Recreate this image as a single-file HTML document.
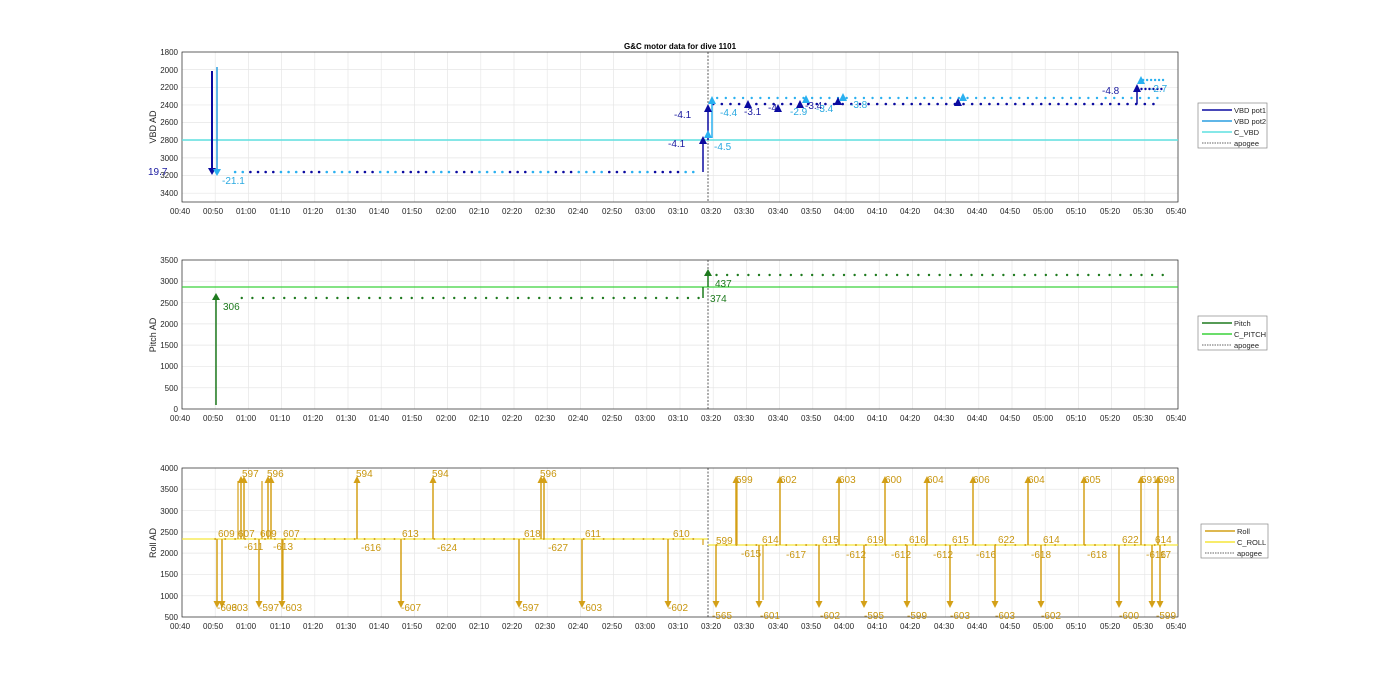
<!DOCTYPE html>
<html><head><meta charset="utf-8"><style>
html,body{margin:0;padding:0;background:#fff;}
svg{display:block;font-family:"Liberation Sans",sans-serif;}
.t{font-size:8px;fill:#262626;}
.yl{font-size:9px;fill:#262626;}
</style></head><body>
<svg id="s" width="1400" height="693" viewBox="0 0 1400 693">
<text x="680" y="49" text-anchor="middle" font-size="8" font-weight="bold" fill="#000">G&amp;C motor data for dive 1101</text>
<g id="grid"></g>
<g id="data"></g>
<g class="t" text-anchor="end">
<text x="178" y="55">1800</text><text x="178" y="73">2000</text><text x="178" y="90">2200</text><text x="178" y="108">2400</text><text x="178" y="125">2600</text><text x="178" y="143">2800</text><text x="178" y="161">3000</text><text x="178" y="178">3200</text><text x="178" y="196">3400</text>
<text x="178" y="263">3500</text><text x="178" y="284">3000</text><text x="178" y="306">2500</text><text x="178" y="327">2000</text><text x="178" y="348">1500</text><text x="178" y="369">1000</text><text x="178" y="391">500</text><text x="178" y="412">0</text>
<text x="178" y="471">4000</text><text x="178" y="492">3500</text><text x="178" y="514">3000</text><text x="178" y="535">2500</text><text x="178" y="556">2000</text><text x="178" y="577">1500</text><text x="178" y="599">1000</text><text x="178" y="620">500</text>
</g>
<text class="yl" transform="translate(156,127) rotate(-90)" text-anchor="middle">VBD AD</text>
<text class="yl" transform="translate(156,335) rotate(-90)" text-anchor="middle">Pitch AD</text>
<text class="yl" transform="translate(156,543) rotate(-90)" text-anchor="middle">Roll AD</text>
<g font-size="10">
<text x="148" y="175" fill="#1a1aa0">19.7</text><text x="222" y="184" fill="#2aa9e0">-21.1</text>
<text x="674" y="118" fill="#1a1aa0">-4.1</text><text x="668" y="147" fill="#1a1aa0">-4.1</text><text x="714" y="150" fill="#2aa9e0">-4.5</text>
<text x="720" y="116" fill="#2aa9e0">-4.4</text><text x="744" y="115" fill="#1a1aa0">-3.1</text><text x="768" y="111" fill="#1a1aa0">-4.</text>
<text x="790" y="115" fill="#2aa9e0">-2.9</text><text x="805" y="109" fill="#1a1aa0">-3.4</text><text x="816" y="112" fill="#2aa9e0">-3.4</text><text x="850" y="108" fill="#2aa9e0">-3.8</text>
<text x="1102" y="94" fill="#1a1aa0">-4.8</text><text x="1150" y="92" fill="#2aa9e0">-2.7</text>
<text x="223" y="310" fill="#1e7a1e">306</text><text x="715" y="287" fill="#1e7a1e">437</text><text x="710" y="302" fill="#1e7a1e">374</text>
</g>
<g font-size="10" fill="#c8960f">
<text x="218" y="537">609</text><text x="238" y="537">607</text><text x="260" y="537">609</text><text x="283" y="537">607</text>
<text x="242" y="477">597</text><text x="267" y="477">596</text><text x="356" y="477">594</text><text x="432" y="477">594</text><text x="540" y="477">596</text>
<text x="402" y="537">613</text><text x="524" y="537">618</text><text x="585" y="537">611</text><text x="673" y="537">610</text>
<text x="244" y="550">-611</text><text x="273" y="550">-613</text><text x="361" y="551">-616</text><text x="437" y="551">-624</text><text x="548" y="551">-627</text>
<text x="217" y="611">-603</text><text x="228" y="611">-603</text><text x="259" y="611">-597</text><text x="282" y="611">-603</text><text x="401" y="611">-607</text><text x="519" y="611">-597</text><text x="582" y="611">-603</text><text x="668" y="611">-602</text>
<text x="716" y="544">599</text><text x="736" y="483">599</text><text x="762" y="543">614</text><text x="780" y="483">602</text><text x="822" y="543">615</text><text x="839" y="483">603</text><text x="867" y="543">619</text><text x="885" y="483">600</text><text x="909" y="543">616</text><text x="927" y="483">604</text><text x="952" y="543">615</text><text x="973" y="483">606</text><text x="998" y="543">622</text><text x="1028" y="483">604</text><text x="1043" y="543">614</text><text x="1084" y="483">605</text><text x="1122" y="543">622</text><text x="1141" y="483">591</text><text x="1158" y="483">598</text><text x="1155" y="543">614</text>
<text x="741" y="557">-615</text><text x="786" y="558">-617</text><text x="846" y="558">-612</text><text x="891" y="558">-612</text><text x="933" y="558">-612</text><text x="976" y="558">-616</text><text x="1031" y="558">-618</text><text x="1087" y="558">-618</text><text x="1146" y="558">-616</text><text x="1160" y="558">17</text>
<text x="712" y="619">-565</text><text x="760" y="619">-601</text><text x="820" y="619">-602</text><text x="864" y="619">-595</text><text x="907" y="619">-599</text><text x="950" y="619">-603</text><text x="995" y="619">-603</text><text x="1041" y="619">-602</text><text x="1119" y="619">-600</text><text x="1156" y="619">-599</text>
</g>
<g font-size="7.5" fill="#262626">
<rect x="1198" y="103" width="69" height="45" fill="#fff" stroke="#888" stroke-width="0.7"/>
<line x1="1202" y1="110" x2="1232" y2="110" stroke="#0a0aa0" stroke-width="1.5"/><text x="1234" y="113">VBD pot1</text>
<line x1="1202" y1="121" x2="1232" y2="121" stroke="#2a9ee0" stroke-width="1.5"/><text x="1234" y="124">VBD pot2</text>
<line x1="1202" y1="132" x2="1232" y2="132" stroke="#5fe0e0" stroke-width="1.5"/><text x="1234" y="135">C_VBD</text>
<line x1="1202" y1="143" x2="1232" y2="143" stroke="#333" stroke-width="0.7" stroke-dasharray="1.5,1"/><text x="1234" y="146">apogee</text>
<rect x="1198" y="316" width="69" height="34" fill="#fff" stroke="#888" stroke-width="0.7"/>
<line x1="1202" y1="323" x2="1232" y2="323" stroke="#1e7a1e" stroke-width="1.5"/><text x="1234" y="326">Pitch</text>
<line x1="1202" y1="334" x2="1232" y2="334" stroke="#3ad23a" stroke-width="1.5"/><text x="1234" y="337">C_PITCH</text>
<line x1="1202" y1="345" x2="1232" y2="345" stroke="#333" stroke-width="0.7" stroke-dasharray="1.5,1"/><text x="1234" y="348">apogee</text>
<rect x="1201" y="524" width="67" height="34" fill="#fff" stroke="#888" stroke-width="0.7"/>
<line x1="1205" y1="531" x2="1235" y2="531" stroke="#d4a017" stroke-width="1.5"/><text x="1237" y="534">Roll</text>
<line x1="1205" y1="542" x2="1235" y2="542" stroke="#f5e63a" stroke-width="1.5"/><text x="1237" y="545">C_ROLL</text>
<line x1="1205" y1="553" x2="1235" y2="553" stroke="#333" stroke-width="0.7" stroke-dasharray="1.5,1"/><text x="1237" y="556">apogee</text>
</g>
</svg>
<script>
var NS="http://www.w3.org/2000/svg",G=document.getElementById('grid'),D=document.getElementById('data');
function el(p,n,a){var e=document.createElementNS(NS,n);for(var k in a)e.setAttribute(k,a[k]);p.appendChild(e);return e;}
var X0=182,X1=1178,dx=(X1-X0)/30;
var panels=[[52,202,9,8],[260,409,7,7],[468,617,7,7]];
panels.forEach(function(p){
 for(var i=0;i<=30;i++){var x=X0+i*dx;el(G,'line',{x1:x,y1:p[0],x2:x,y2:p[1],stroke:'#e6e6e6','stroke-width':0.7});}
 var n=p[3]; for(var j=0;j<=n;j++){var y=p[0]+(p[1]-p[0])*j/(p==panels[0]?8.5:n);el(G,'line',{x1:X0,y1:y,x2:X1,y2:y,stroke:'#e6e6e6','stroke-width':0.7});}
 el(G,'rect',{x:X0,y:p[0],width:X1-X0,height:p[1]-p[0],fill:'none',stroke:'#262626','stroke-width':0.7});
 el(G,'line',{x1:708,y1:p[0],x2:708,y2:p[1],stroke:'#333','stroke-width':0.8,'stroke-dasharray':'2,1.5'});
});
function tx(t){return X0+(t-40)*dx/10;}
el(D,'line',{x1:X0,y1:140,x2:X1,y2:140,stroke:'#5fe0e0','stroke-width':1.5});
el(D,'line',{x1:212,y1:71,x2:212,y2:172,stroke:'#0a0aa0','stroke-width':2});
el(D,'line',{x1:217,y1:67,x2:217,y2:172,stroke:'#2a9ee0','stroke-width':1.5});
for(var t=56;t<195;t+=2.3){el(D,'circle',{cx:tx(t),cy:172,r:1.3,fill:(Math.round(t)%2?'#0a0aa0':'#2ab0f0')});}
for(var t=200;t<334;t+=2.6){el(D,'circle',{cx:tx(t),cy:104,r:1.3,fill:'#0a0aa0'});el(D,'circle',{cx:tx(t+1.2),cy:98,r:1.2,fill:'#2ab0f0'});}
for(var t=329;t<336;t+=1.2){el(D,'circle',{cx:tx(t),cy:89,r:1.2,fill:'#0a0aa0'});el(D,'circle',{cx:tx(t+0.5),cy:80,r:1.2,fill:'#2ab0f0'});}
el(D,'line',{x1:703,y1:172,x2:703,y2:140,stroke:'#0a0aa0','stroke-width':1.5});
el(D,'line',{x1:708,y1:140,x2:708,y2:108,stroke:'#0a0aa0','stroke-width':1.5});
el(D,'line',{x1:712,y1:138,x2:712,y2:100,stroke:'#2ab0f0','stroke-width':1.5});
el(D,'line',{x1:1137,y1:104,x2:1137,y2:88,stroke:'#0a0aa0','stroke-width':1.5});
[[703,140,'#0a0aa0'],[708,108,'#0a0aa0'],[712,100,'#2ab0f0'],[708,134,'#2ab0f0'],[778,108,'#0a0aa0'],[800,104,'#0a0aa0'],[806,99,'#2ab0f0'],[838,101,'#0a0aa0'],[843,97,'#2ab0f0'],[958,102,'#0a0aa0'],[963,97,'#2ab0f0'],[1137,88,'#0a0aa0'],[1141,80,'#2ab0f0'],[748,104,'#0a0aa0']].forEach(function(a){
 el(D,'path',{d:'M'+(a[0]-4)+','+(a[1]+4)+'L'+(a[0]+4)+','+(a[1]+4)+'L'+a[0]+','+(a[1]-4)+'Z',fill:a[2]});});
el(D,'path',{d:'M208,168L216,168L212,175Z',fill:'#0a0aa0'});
el(D,'path',{d:'M213,169L221,169L217,176Z',fill:'#2ab0f0'});
el(D,'line',{x1:X0,y1:287,x2:X1,y2:287,stroke:'#3ad23a','stroke-width':1.2});
el(D,'line',{x1:216,y1:405,x2:216,y2:297,stroke:'#1e7a1e','stroke-width':1.5});
el(D,'path',{d:'M212,300L220,300L216,293Z',fill:'#1e7a1e'});
for(var t=58;t<196;t+=3.2){el(D,'circle',{cx:tx(t),cy:298,r:1.2,fill:'#1e7a1e'});}
for(var t=201;t<336;t+=3.2){el(D,'circle',{cx:tx(t),cy:275,r:1.2,fill:'#1e7a1e'});}
el(D,'line',{x1:703,y1:298,x2:703,y2:287,stroke:'#1e7a1e','stroke-width':1.5});
el(D,'line',{x1:708,y1:287,x2:708,y2:273,stroke:'#1e7a1e','stroke-width':1.5});
el(D,'path',{d:'M704,276L712,276L708,269Z',fill:'#1e7a1e'});
el(D,'line',{x1:X0,y1:539,x2:708,y2:539,stroke:'#f5e63a','stroke-width':1.2});
el(D,'line',{x1:708,y1:545,x2:X1,y2:545,stroke:'#f5e63a','stroke-width':1.2});
for(var t=50;t<196;t+=3){el(D,'circle',{cx:tx(t),cy:539,r:1,fill:'#d4a017'});}
for(var t=201;t<337;t+=3){el(D,'circle',{cx:tx(t),cy:545,r:1,fill:'#d4a017'});}
var ups=[[241,539],[244,539],[268,539],[271,539],[357,539],[433,539],[541,539],[544,539],[736,545],[780,545],[839,545],[885,545],[927,545],[973,545],[1028,545],[1084,545],[1141,545],[1158,545]];
var dns=[[217,539],[222,539],[259,539],[282,539],[401,539],[519,539],[582,539],[668,539],[716,545],[759,545],[819,545],[864,545],[907,545],[950,545],[995,545],[1041,545],[1119,545],[1152,545],[1160,545]];
var C='#d4a017';
ups.forEach(function(a){el(D,'line',{x1:a[0],y1:a[1],x2:a[0],y2:481,stroke:C,'stroke-width':1.5});el(D,'path',{d:'M'+(a[0]-3.5)+',483L'+(a[0]+3.5)+',483L'+a[0]+',476Z',fill:C});});
dns.forEach(function(a){el(D,'line',{x1:a[0],y1:a[1],x2:a[0],y2:603,stroke:C,'stroke-width':1.5});el(D,'path',{d:'M'+(a[0]-3.5)+',601L'+(a[0]+3.5)+',601L'+a[0]+',608Z',fill:C});});
[[238,481,539],[262,481,539],[283,539,600],[703,545,539],[737,481,545],[763,545,600]].forEach(function(a){el(D,'line',{x1:a[0],y1:a[1],x2:a[0],y2:a[2],stroke:C,'stroke-width':1.2});});
</script>
<div style="position:absolute;left:0;top:0;width:1400px;height:693px;pointer-events:none;font-family:'Liberation Sans',sans-serif;font-size:8px;color:#262626">
<div style="position:absolute;top:207px;left:0;width:1400px;height:12px">
<span style="position:absolute;left:170px">00:40</span><span style="position:absolute;left:203px">00:50</span><span style="position:absolute;left:236px">01:00</span><span style="position:absolute;left:270px">01:10</span><span style="position:absolute;left:303px">01:20</span><span style="position:absolute;left:336px">01:30</span><span style="position:absolute;left:369px">01:40</span><span style="position:absolute;left:402px">01:50</span><span style="position:absolute;left:436px">02:00</span><span style="position:absolute;left:469px">02:10</span><span style="position:absolute;left:502px">02:20</span><span style="position:absolute;left:535px">02:30</span><span style="position:absolute;left:568px">02:40</span><span style="position:absolute;left:602px">02:50</span><span style="position:absolute;left:635px">03:00</span><span style="position:absolute;left:668px">03:10</span><span style="position:absolute;left:701px">03:20</span><span style="position:absolute;left:734px">03:30</span><span style="position:absolute;left:768px">03:40</span><span style="position:absolute;left:801px">03:50</span><span style="position:absolute;left:834px">04:00</span><span style="position:absolute;left:867px">04:10</span><span style="position:absolute;left:900px">04:20</span><span style="position:absolute;left:934px">04:30</span><span style="position:absolute;left:967px">04:40</span><span style="position:absolute;left:1000px">04:50</span><span style="position:absolute;left:1033px">05:00</span><span style="position:absolute;left:1066px">05:10</span><span style="position:absolute;left:1100px">05:20</span><span style="position:absolute;left:1133px">05:30</span><span style="position:absolute;left:1166px">05:40</span>
</div>
<div style="position:absolute;top:414px;left:0;width:1400px;height:12px">
<span style="position:absolute;left:170px">00:40</span><span style="position:absolute;left:203px">00:50</span><span style="position:absolute;left:236px">01:00</span><span style="position:absolute;left:270px">01:10</span><span style="position:absolute;left:303px">01:20</span><span style="position:absolute;left:336px">01:30</span><span style="position:absolute;left:369px">01:40</span><span style="position:absolute;left:402px">01:50</span><span style="position:absolute;left:436px">02:00</span><span style="position:absolute;left:469px">02:10</span><span style="position:absolute;left:502px">02:20</span><span style="position:absolute;left:535px">02:30</span><span style="position:absolute;left:568px">02:40</span><span style="position:absolute;left:602px">02:50</span><span style="position:absolute;left:635px">03:00</span><span style="position:absolute;left:668px">03:10</span><span style="position:absolute;left:701px">03:20</span><span style="position:absolute;left:734px">03:30</span><span style="position:absolute;left:768px">03:40</span><span style="position:absolute;left:801px">03:50</span><span style="position:absolute;left:834px">04:00</span><span style="position:absolute;left:867px">04:10</span><span style="position:absolute;left:900px">04:20</span><span style="position:absolute;left:934px">04:30</span><span style="position:absolute;left:967px">04:40</span><span style="position:absolute;left:1000px">04:50</span><span style="position:absolute;left:1033px">05:00</span><span style="position:absolute;left:1066px">05:10</span><span style="position:absolute;left:1100px">05:20</span><span style="position:absolute;left:1133px">05:30</span><span style="position:absolute;left:1166px">05:40</span>
</div>
<div style="position:absolute;top:622px;left:0;width:1400px;height:12px">
<span style="position:absolute;left:170px">00:40</span><span style="position:absolute;left:203px">00:50</span><span style="position:absolute;left:236px">01:00</span><span style="position:absolute;left:270px">01:10</span><span style="position:absolute;left:303px">01:20</span><span style="position:absolute;left:336px">01:30</span><span style="position:absolute;left:369px">01:40</span><span style="position:absolute;left:402px">01:50</span><span style="position:absolute;left:436px">02:00</span><span style="position:absolute;left:469px">02:10</span><span style="position:absolute;left:502px">02:20</span><span style="position:absolute;left:535px">02:30</span><span style="position:absolute;left:568px">02:40</span><span style="position:absolute;left:602px">02:50</span><span style="position:absolute;left:635px">03:00</span><span style="position:absolute;left:668px">03:10</span><span style="position:absolute;left:701px">03:20</span><span style="position:absolute;left:734px">03:30</span><span style="position:absolute;left:768px">03:40</span><span style="position:absolute;left:801px">03:50</span><span style="position:absolute;left:834px">04:00</span><span style="position:absolute;left:867px">04:10</span><span style="position:absolute;left:900px">04:20</span><span style="position:absolute;left:934px">04:30</span><span style="position:absolute;left:967px">04:40</span><span style="position:absolute;left:1000px">04:50</span><span style="position:absolute;left:1033px">05:00</span><span style="position:absolute;left:1066px">05:10</span><span style="position:absolute;left:1100px">05:20</span><span style="position:absolute;left:1133px">05:30</span><span style="position:absolute;left:1166px">05:40</span>
</div>
</div>
</body></html>
